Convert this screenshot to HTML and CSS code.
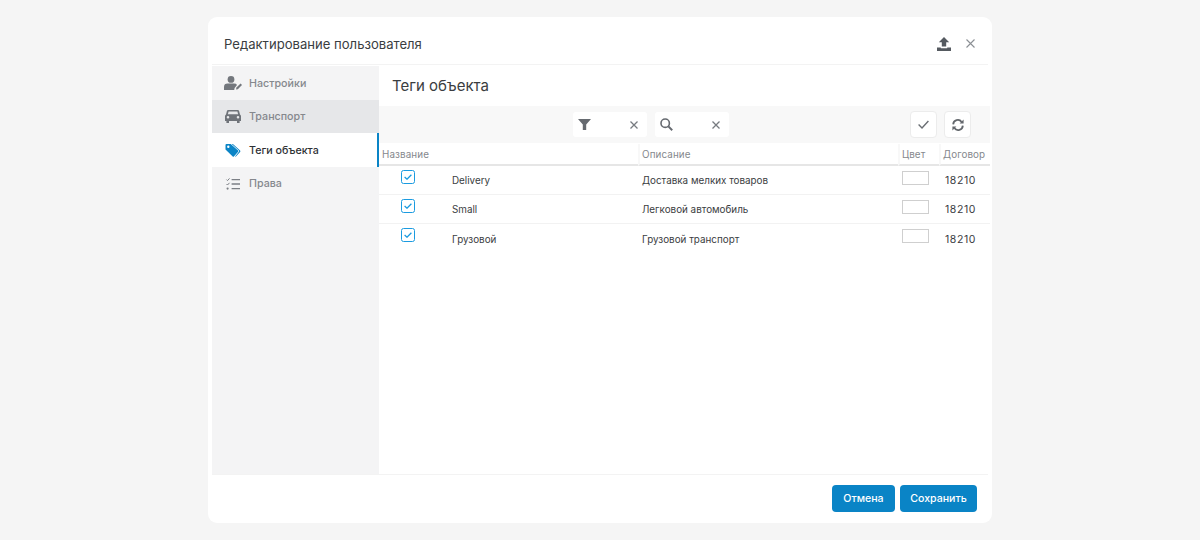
FILE: index.html
```html
<!DOCTYPE html>
<html lang="ru">
<head>
<meta charset="utf-8">
<title>Редактирование пользователя</title>
<link rel="stylesheet" href="styles.css">
</head>
<body>
<div class="dialog">
  <header class="head">
    <h1 class="head-title">Редактирование пользователя</h1>
    <svg class="upload" viewBox="0 0 14 14" width="14" height="14"><path d="M7 0 L12.2 5.2 H9.2 V9.6 H4.8 V5.2 H1.8 Z M0 10.6 H3.8 V11.2 H10.2 V10.6 H14 V14 H0 Z" fill="#555a60"/></svg>
    <svg class="x x-head" viewBox="0 0 9 9" width="9" height="9"><path d="M.5.5l8 8M8.5.5l-8 8" stroke="#8b8f94" stroke-width="1.1" fill="none"/></svg>
  </header>
  <div class="body">
    <nav class="side">
      <a class="item"><svg class="ico" viewBox="0 0 18 14" width="18" height="14"><circle cx="7" cy="3.4" r="3.4" fill="#73777d"/><path d="M0 14 V11 Q0 7.6 3.6 7.6 H10 Q12.4 7.6 13 9 L10.6 12 L10.2 14 Z" fill="#73777d"/><path d="M12 13.6 L12.4 11.6 L16.6 7.6 L18 9 L13.8 13.2 Z" fill="#73777d"/></svg><span>Настройки</span></a>
      <a class="item item-hover"><svg class="ico" viewBox="0 0 16 13" width="16" height="13"><path fill-rule="evenodd" d="M3.2 0 H12.8 Q13.8 0 14.1 1 L15 4.4 Q16 5 16 6.2 V11 H14.6 V13 H12 V11 H4 V13 H1.4 V11 H0 V6.2 Q0 5 1 4.4 L1.9 1 Q2.2 0 3.2 0 Z M3.6 1.6 L2.9 4.2 H13.1 L12.4 1.6 Z M3 6 A1.3 1.3 0 1 0 3 8.6 A1.3 1.3 0 1 0 3 6 Z M13 6 A1.3 1.3 0 1 0 13 8.6 A1.3 1.3 0 1 0 13 6 Z" fill="#6f7379"/></svg><span>Транспорт</span></a>
      <a class="item item-active"><svg class="ico" viewBox="0 0 15 13" width="15" height="13"><path fill-rule="evenodd" d="M0 1 Q0 0 1 0 H5.2 L12.6 6.6 Q13.2 7.2 12.6 7.8 L8.4 12.4 Q7.8 13 7.2 12.4 L0 5.6 Z M2.8 1.6 A1.2 1.2 0 1 0 2.8 4 A1.2 1.2 0 1 0 2.8 1.6 Z" fill="#0a84c6"/><path d="M7.4 0 L14.6 6.4 Q15.2 7.2 14.6 8 L10.2 12.8 L9.6 12.4 L13.4 7.8 Q14 7.2 13.4 6.6 L6.2 0 Z" fill="#0a84c6"/></svg><span>Теги объекта</span></a>
      <a class="item"><svg class="ico" viewBox="0 0 14 12" width="14" height="12"><path d="M.5 1.6l1 1 2-2.2M.5 6l1 1 2-2.2" stroke="#7b7f85" fill="none"/><circle cx="1.6" cy="10.6" r="1.1" fill="#7b7f85"/><path d="M5.6 1.6H14M5.6 6H14M5.6 10.6H14" stroke="#7b7f85" stroke-width="1.3"/></svg><span>Права</span></a>
    </nav>
    <main class="main">
      <h2 class="main-title">Теги объекта</h2>
      <div class="toolbar">
        <div class="field">
          <svg viewBox="0 0 13 11" width="13" height="11"><path d="M0 0H13L8.2 5.6V11H4.8V5.6Z" fill="#666a70"/></svg>
          <svg class="x" viewBox="0 0 8 8" width="8" height="8"><path d="M.5.5l7 7M7.5.5l-7 7" stroke="#777b80" stroke-width="1.3" fill="none"/></svg>
        </div>
        <div class="field">
          <svg viewBox="0 0 13 13" width="13" height="13"><circle cx="5.2" cy="5.2" r="4.2" stroke="#666a70" stroke-width="1.6" fill="none"/><path d="M8.4 8.4L12.2 12.2" stroke="#666a70" stroke-width="2"/></svg>
          <svg class="x" viewBox="0 0 8 8" width="8" height="8"><path d="M.5.5l7 7M7.5.5l-7 7" stroke="#777b80" stroke-width="1.3" fill="none"/></svg>
        </div>
        <button class="tool tool-first"><svg viewBox="0 0 11 9" width="11" height="9"><path d="M.6 4.6L4 8 10.4 1" stroke="#6a6e73" stroke-width="1.4" fill="none"/></svg></button>
        <button class="tool"><svg viewBox="0 0 12 12" width="12" height="12"><path d="M1.2 5.4A4.6 4.6 0 0 1 9.6 3M10.8 6.6A4.6 4.6 0 0 1 2.4 9" stroke="#63676c" stroke-width="1.8" fill="none"/><path d="M11.6 .6V4.6H7.6ZM.4 11.4V7.4H4.4Z" fill="#63676c"/></svg></button>
      </div>
      <div class="table">
        <div class="th th-name">Название</div>
        <div class="th">Описание</div>
        <div class="th">Цвет</div>
        <div class="th">Договор</div>

        <div class="td td-name"><span class="check"><svg viewBox="0 0 8 6" width="8" height="6"><path d="M.6 3L3 5.2 7.4.8" stroke="#1b9be0" stroke-width="1.3" fill="none"/></svg></span><span>Delivery</span></div>
        <div class="td">Доставка мелких товаров</div>
        <div class="td"><span class="swatch"></span></div>
        <div class="td">18210</div>

        <div class="td td-name"><span class="check"><svg viewBox="0 0 8 6" width="8" height="6"><path d="M.6 3L3 5.2 7.4.8" stroke="#1b9be0" stroke-width="1.3" fill="none"/></svg></span><span>Small</span></div>
        <div class="td">Легковой автомобиль</div>
        <div class="td"><span class="swatch"></span></div>
        <div class="td">18210</div>

        <div class="td td-name td-last"><span class="check"><svg viewBox="0 0 8 6" width="8" height="6"><path d="M.6 3L3 5.2 7.4.8" stroke="#1b9be0" stroke-width="1.3" fill="none"/></svg></span><span>Грузовой</span></div>
        <div class="td td-last">Грузовой транспорт</div>
        <div class="td td-last"><span class="swatch"></span></div>
        <div class="td td-last">18210</div>
      </div>
    </main>
  </div>
  <footer class="foot">
    <button class="btn btn-cancel">Отмена</button>
    <button class="btn btn-save">Сохранить</button>
  </footer>
</div>
</body>
</html>
```
FILE: styles.css
```css
* { box-sizing: border-box; }
html, body { margin: 0; height: 100%; }
body {
  background: #f5f5f5;
  font-family: Inter, "Liberation Sans", sans-serif;
  color: #33363a;
  overflow: hidden;
}
.dialog {
  width: 784px;
  height: 506px;
  margin: 17px auto 0;
  padding: 0 2px 0 4px;
  background: #fff;
  border-radius: 9px;
  display: flex;
  flex-direction: column;
}
.head {
  height: 48px;
  flex: none;
  display: flex;
  align-items: center;
  padding: 6px 13px 0 12px;
  border-bottom: 1px solid #f3f3f3;
  margin-right: 2px;
}
.head-title {
  margin: 0;
  flex: 1;
  font-size: 13.1px;
  line-height: 20px;
  font-weight: 400;
  color: #3a3d41;
}
.upload { margin-right: 15px; }
.body { flex: 1; display: flex; min-height: 0; padding-top: 1px; }
.side {
  width: 167px;
  flex: none;
  background: #f4f4f5;
  display: flex;
  flex-direction: column;
}
.item {
  height: 33.5px;
  flex: none;
  display: flex;
  align-items: center;
  padding: 1px 0 0 12px;
  font-size: 10.7px;
  font-weight: 500;
  color: #85888d;
}
.ico { flex: none; margin-right: 7px; width: 18px; }
.item-hover { background: #e6e7e9; }
.item-active {
  background: #fff;
  color: #2e3135;
  border-right: 2px solid #0a84c6;
}
.main { flex: 1; min-width: 0; display: flex; flex-direction: column; }
.main-title {
  margin: 0;
  height: 40px;
  padding: 10px 0 0 13px;
  font-size: 15px;
  line-height: 20px;
  font-weight: 400;
  color: #3a3d41;
}
.toolbar {
  height: 37px;
  flex: none;
  background: #f8f8f8;
  display: flex;
  align-items: center;
  padding: 0 19px 0 194px;
}
.field {
  width: 74px;
  height: 25px;
  margin-right: 8px;
  padding: 0 9px 0 5px;
  background: #fff;
  border-radius: 3px;
  display: flex;
  align-items: center;
  justify-content: space-between;
}
.tool {
  width: 27px;
  height: 27px;
  padding: 0;
  margin-left: 7px;
  background: #fff;
  border: 1px solid #ececec;
  border-radius: 4px;
  display: flex;
  align-items: center;
  justify-content: center;
}
.tool-first { margin-left: auto; }
.table {
  display: grid;
  grid-template-columns: 259px 260px 41px 51px;
  grid-template-rows: 22px;
  grid-auto-rows: 29px;
  margin-top: 1px;
}
.th {
  display: flex;
  align-items: center;
  padding-left: 2px;
  color: #85888d;
  font-size: 9.85px;
  letter-spacing: .1px;
  border-bottom: 2px solid #e6e6e6;
  border-left: 2px solid #f8f8f8;
}
.th-name { border-left: 0; padding-left: 3px; }
.td {
  display: flex;
  align-items: center;
  padding: 0 0 0 4px;
  font-size: 9.85px;
  color: #3a3d41;
  border-bottom: 1px solid #f2f2f2;
}
.td:nth-child(4n) { padding: 1px 0 0 6px; font-size: 10.5px; letter-spacing: .6px; }
.td:nth-child(4n+3) { align-items: flex-start; padding: 5px 0 0 4px; }
.td:nth-child(4n+1) { padding: 0 0 0 73px; position: relative; }
.td-last { border-bottom: 0; }
.check {
  position: absolute;
  left: 22px;
  top: 4px;
  width: 14px;
  height: 14px;
  border: 1.5px solid #1b9be0;
  border-radius: 2.5px;
  display: flex;
  align-items: center;
  justify-content: center;
}
.swatch {
  display: block;
  width: 27px;
  height: 14px;
  background: #fff;
  border: 1px solid #cfcfcf;
}
.foot {
  height: 49px;
  flex: none;
  display: flex;
  justify-content: flex-end;
  align-items: flex-start;
  gap: 5px;
  padding: 10px 11px 0 0;
  border-top: 1px solid #f3f3f3;
  margin-right: 2px;
}
.btn {
  height: 27px;
  padding: 0;
  background: #0a84c6;
  border: 0;
  border-radius: 4px;
  color: #fff;
  font-family: inherit;
  font-size: 10.6px;
  font-weight: 500;
}
.btn-cancel { width: 63px; }
.btn-save { width: 77px; }
```
